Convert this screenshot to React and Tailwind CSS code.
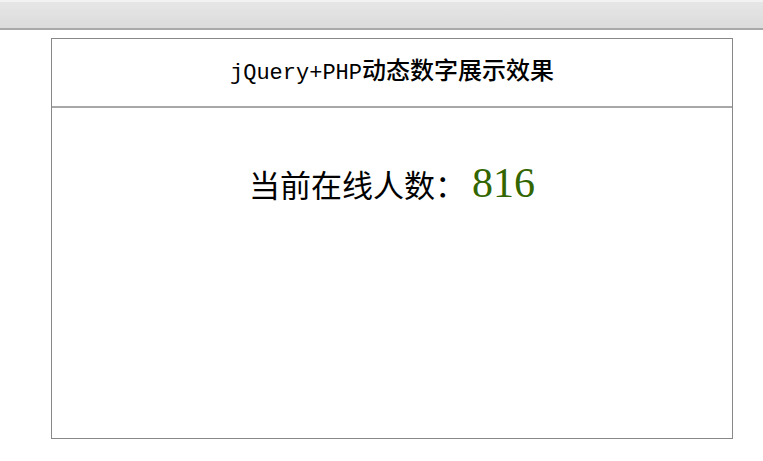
export default function App() {
  return (
    <div className="h-[461px] w-[763px] overflow-hidden bg-white">
      {/* browser-ish top strip */}
      <div className="h-[30px] border-t-2 border-b-2 border-t-[#f2f2f2] border-b-[#a9a9a9] bg-gradient-to-b from-[#e6e6e6] to-[#dcdcdc]" />

      <div className="ml-[51px] mt-[8px] h-[401px] w-[682px] border border-[#888888]">
        <div className="flex h-[69px] items-center justify-center border-b-2 border-[#a8a8a8] pb-[3px]">
          <h1 className="text-[24px] font-medium leading-none text-black [font-family:'Noto_Sans_CJK_SC',sans-serif]">
            <span className="text-[22px] font-normal [font-family:'Liberation_Mono',monospace]">jQuery+PHP</span>
            动态数字展示效果
          </h1>
        </div>

        <div className="flex justify-center pt-[54px]">
          <p className="flex items-baseline text-[31px] leading-none text-black [font-family:'Noto_Sans_CJK_SC',sans-serif]">
            当前在线人数：
            <span className="ml-[6px] text-[42px] text-[#336600] [font-family:'Liberation_Serif',serif]">816</span>
          </p>
        </div>
      </div>
    </div>
  );
}
